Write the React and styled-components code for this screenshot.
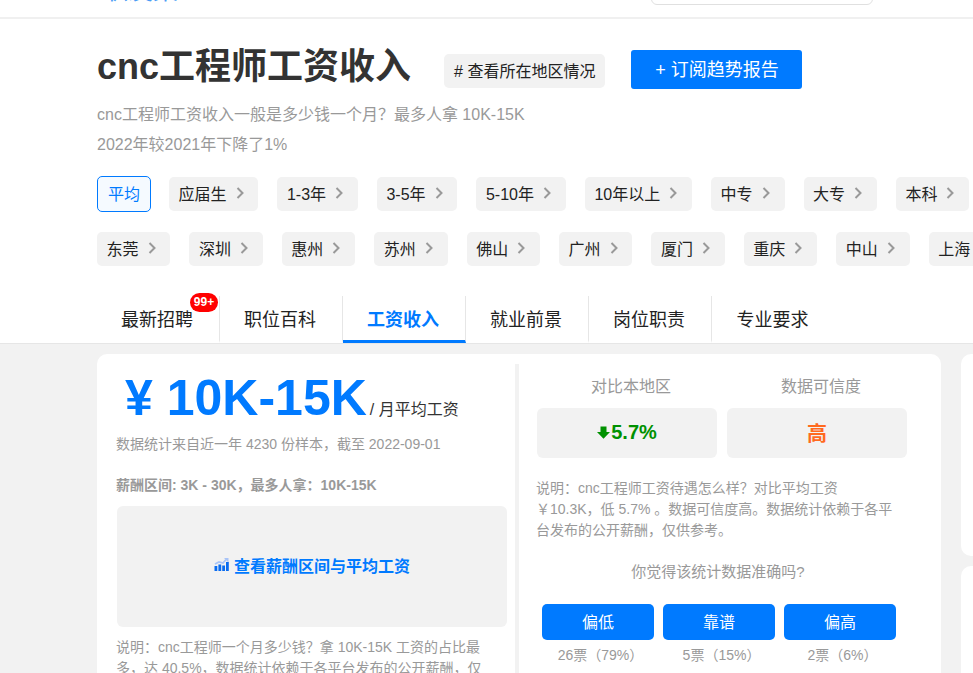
import React from 'react'
import styled, { createGlobalStyle } from 'styled-components'

const expTags = ['应届生', '1-3年', '3-5年', '5-10年', '10年以上', '中专', '大专', '本科']
const cityTags = ['东莞', '深圳', '惠州', '苏州', '佛山', '广州', '厦门', '重庆', '中山', '上海']
const tabs = ['最新招聘', '职位百科', '工资收入', '就业前景', '岗位职责', '专业要求']
const votes = [
  { name: '偏低', count: '26票（79%）' },
  { name: '靠谱', count: '5票（15%）' },
  { name: '偏高', count: '2票（6%）' },
]

function Chevron() {
  return (
    <ChevronIcon viewBox="0 0 8 12">
      <path d="M1.5 1 L6.5 6 L1.5 11" fill="none" stroke="#999" strokeWidth="2" />
    </ChevronIcon>
  )
}

function App() {
  return (
    <Page>
      <GlobalStyle />
      <Header>
        <Logo>职友集</Logo>
        <SearchBox />
      </Header>

      <Intro>
        <TitleRow>
          <Title>cnc工程师工资收入</Title>
          <AreaTag># 查看所在地区情况</AreaTag>
          <SubscribeButton>+ 订阅趋势报告</SubscribeButton>
        </TitleRow>
        <SummaryBlock>
          <div>cnc工程师工资收入一般是多少钱一个月？最多人拿 10K-15K</div>
          <div>2022年较2021年下降了1%</div>
        </SummaryBlock>

        <ExpRow>
          <ActiveChip>平均</ActiveChip>
          {expTags.map((t) => (
            <Chip key={t}>
              {t}
              <Chevron />
            </Chip>
          ))}
        </ExpRow>
        <CityRow>
          {cityTags.map((t) => (
            <Chip key={t}>
              {t}
              <Chevron />
            </Chip>
          ))}
        </CityRow>

        <Tabs>
          {tabs.map((t, i) => (
            <Tab key={t} $active={i === 2}>
              {t}
              {i === 0 && <Badge>99+</Badge>}
            </Tab>
          ))}
        </Tabs>
      </Intro>

      <Main>
        <Card>
          <LeftPanel>
            <SalaryRow>
              <Salary>¥ 10K-15K</Salary>
              <SalaryUnit>/ 月平均工资</SalaryUnit>
            </SalaryRow>
            <Muted>数据统计来自近一年 4230 份样本，截至 2022-09-01</Muted>
            <RangeText>薪酬区间: 3K - 30K，最多人拿：10K-15K</RangeText>
            <ChartBox>
              <svg width="15" height="13" viewBox="0 0 15 13">
                <path d="M1 6 L5 4 L9 5 L12 1.5" fill="none" stroke="#a9c4f7" strokeWidth="1.8" />
                <path d="M10 0h4.5v4.5z" fill="#a9c4f7" />
                <path d="M0.5 8h2.8v5H0.5zM4.4 6.5h2.8V13H4.4zM8.2 7.5h2.8V13H8.2zM12 4h2.8v9H12z" fill="#0a6cf0" />
              </svg>
              查看薪酬区间与平均工资
            </ChartBox>
            <Explain>
              说明：cnc工程师一个月多少钱？拿 10K-15K 工资的占比最多，达 40.5%，数据统计依赖于各平台发布的公开薪酬，仅供参考。
            </Explain>
          </LeftPanel>

          <RightPanel>
            <CompareGrid>
              <CompareLabel>对比本地区</CompareLabel>
              <CompareLabel>数据可信度</CompareLabel>
              <CompareValue $color="#009100">
                <svg width="13" height="13" viewBox="0 0 13 13">
                  <path d="M3.5 0.5h6v5.5h3.5L6.5 12.8 0 6h3.5z" fill="#009100" />
                </svg>
                5.7%
              </CompareValue>
              <CompareValue $color="#ff6a1f">高</CompareValue>
            </CompareGrid>
            <RightExplain>
              说明：cnc工程师工资待遇怎么样？对比平均工资￥10.3K，低 5.7% 。数据可信度高。数据统计依赖于各平台发布的公开薪酬，仅供参考。
            </RightExplain>
            <Question>你觉得该统计数据准确吗?</Question>
            <VoteRow>
              {votes.map((v) => (
                <Vote key={v.name}>
                  <VoteButton>{v.name}</VoteButton>
                  <VoteCount>{v.count}</VoteCount>
                </Vote>
              ))}
            </VoteRow>
          </RightPanel>
        </Card>

        <Side>
          <SideCard $height={202} />
          <SideCard $height={300} />
        </Side>
      </Main>
    </Page>
  )
}

export default App

const GlobalStyle = createGlobalStyle`
html, body {
  margin: 0;
  height: 100%;
  overflow: hidden;
  background: #fff;
}
body {
  font-family: "Liberation Sans", "Noto Sans CJK SC", sans-serif;
}
* {
  box-sizing: border-box;
}
`

const Page = styled.div`
width: 973px;
height: 673px;
overflow: hidden;
display: flex;
flex-direction: column;
`

const Header = styled.div`
flex: none;
height: 19px;
border-bottom: 2px solid #f0f0f0;
overflow: hidden;
display: flex;
align-items: flex-end;
padding-left: 103px;
`

const Logo = styled.div`
width: 75px;
height: 28px;
margin-bottom: 13px;
flex: none;
font-size: 25px;
line-height: 28px;
color: #4a9cf5;
`

const SearchBox = styled.div`
width: 222px;
height: 30px;
margin-left: 473px;
margin-bottom: 12px;
border: 1px solid #e0e0e0;
border-radius: 6px;
`

const Intro = styled.div`
flex: none;
padding-left: 97px;
`

const TitleRow = styled.div`
display: flex;
align-items: flex-start;
height: 39px;
margin-top: 31px;
`

const Title = styled.h1`
margin: 0;
font-size: 36px;
line-height: 34px;
font-weight: bold;
color: #333;
white-space: nowrap;
`

const AreaTag = styled.div`
margin-left: 33px;
margin-top: 4px;
height: 34px;
padding: 0 10px 3px;
display: flex;
align-items: center;
background: #f2f2f2;
border-radius: 5px;
font-size: 16px;
color: #222;
white-space: nowrap;
`

const SubscribeButton = styled.button`
margin-left: 26px;
width: 171px;
height: 39px;
padding: 0 0 3px;
border: none;
border-radius: 3px;
background: #007aff;
color: #fff;
font-family: inherit;
font-size: 18px;
`

const SummaryBlock = styled.div`
margin-top: 11px;
font-size: 16px;
line-height: 30px;
color: #999;
`

const ExpRow = styled.div`
display: flex;
align-items: center;
gap: 19px;
margin-top: 16px;
height: 36px;
white-space: nowrap;
`

const CityRow = styled(ExpRow)`
margin-top: 20px;
height: 34px;
`

const Chip = styled.div`
flex: none;
height: 34px;
padding: 0 14.9px 2px 9.5px;
display: flex;
align-items: center;
gap: 9px;
background: #f2f2f2;
border-radius: 5px;
font-size: 16px;
color: #222;
`

const ActiveChip = styled.div`
flex: none;
width: 54px;
height: 36px;
margin-right: -1px;
padding-bottom: 3px;
display: flex;
align-items: center;
justify-content: center;
background: #f5faff;
border: 1px solid #007aff;
border-radius: 5px;
font-size: 16px;
color: #007aff;
`

const ChevronIcon = styled.svg`
width: 8px;
height: 12px;
flex: none;
`

const Tabs = styled.div`
display: flex;
margin-top: 30px;
height: 47px;
`

const Tab = styled.div`
position: relative;
width: 123px;
height: 47px;
display: flex;
align-items: center;
justify-content: center;
padding: 0 2px 1px 0;
font-size: 18px;
font-weight: ${(p) => (p.$active ? 'bold' : 'normal')};
color: ${(p) => (p.$active ? '#007aff' : '#222')};
border-right: 1px solid #e6e6e6;
border-bottom: 3px solid ${(p) => (p.$active ? '#007aff' : 'transparent')};
&:last-child {
  border-right: none;
}
`

const Badge = styled.span`
position: absolute;
left: 93px;
top: -3px;
width: 28px;
height: 19px;
border-radius: 10px;
background: #f00;
color: #fff;
font-size: 12px;
font-weight: bold;
line-height: 19px;
text-align: center;
`

const Main = styled.div`
flex: 1;
display: flex;
align-items: flex-start;
gap: 20px;
padding: 10px 0 0 97px;
background: #f2f2f2;
border-top: 1px solid #e6e6e6;
overflow: hidden;
`

const Card = styled.div`
flex: none;
width: 844px;
height: 500px;
display: flex;
align-items: flex-start;
background: #fff;
border-radius: 10px;
`

const LeftPanel = styled.div`
width: 418px;
flex: none;
padding: 19px 20px 0 20px;
`

const SalaryRow = styled.div`
display: flex;
align-items: baseline;
height: 50px;
padding-left: 8px;
`

const Salary = styled.div`
font-size: 50px;
line-height: 50px;
font-weight: bold;
color: #007aff;
white-space: pre;
`

const SalaryUnit = styled.span`
margin-left: 3px;
font-size: 16px;
color: #333;
`

const Muted = styled.div`
margin: 11px 0 0 -1px;
font-size: 14px;
line-height: 20px;
color: #999;
`

const RangeText = styled(Muted)`
margin-top: 21px;
font-weight: bold;
`

const ChartBox = styled.div`
margin-top: 11px;
width: 390px;
height: 121px;
padding-bottom: 4px;
display: flex;
align-items: center;
justify-content: center;
gap: 5px;
background: #f2f2f2;
border-radius: 6px;
font-size: 16px;
font-weight: bold;
color: #007aff;
`

const Explain = styled.div`
margin: 10px 0 0 -1px;
width: 375px;
font-size: 14px;
line-height: 21px;
color: #999;
`

const RightPanel = styled.div`
flex: 1;
margin-top: 10px;
padding: 0 20px 0 18px;
border-left: 4px solid #f2f2f2;
height: 490px;
`

const CompareGrid = styled.div`
display: grid;
grid-template-columns: 180px 180px;
column-gap: 10px;
`

const CompareLabel = styled.div`
height: 44px;
padding: 13px 0 0 8px;
font-size: 16px;
line-height: 20px;
text-align: center;
color: #999;
`

const CompareValue = styled.div`
height: 50px;
padding-bottom: 1px;
display: flex;
align-items: center;
justify-content: center;
gap: 1px;
background: #f2f2f2;
border-radius: 6px;
font-size: 20px;
font-weight: bold;
color: ${(p) => p.$color};
`

const RightExplain = styled.div`
margin: 20px 0 0 -1px;
width: 360px;
font-size: 14px;
line-height: 21px;
color: #999;
`

const Question = styled.div`
margin-top: 21px;
width: 362px;
font-size: 15px;
line-height: 20px;
text-align: center;
color: #999;
`

const VoteRow = styled.div`
display: flex;
gap: 9px;
margin-top: 22px;
padding-left: 5px;
`

const Vote = styled.div`
width: 112px;
`

const VoteButton = styled.button`
display: block;
width: 100%;
height: 36px;
padding: 0 0 2px;
border: none;
border-radius: 5px;
background: #007aff;
color: #fff;
font-family: inherit;
font-size: 16px;
`

const VoteCount = styled.div`
margin-top: 5px;
padding-left: 5px;
font-size: 14px;
line-height: 20px;
text-align: center;
color: #999;
`

const Side = styled.div`
flex: none;
width: 300px;
display: flex;
flex-direction: column;
gap: 10px;
`

const SideCard = styled.div`
height: ${(p) => p.$height}px;
background: #fff;
border-radius: 10px;
`
